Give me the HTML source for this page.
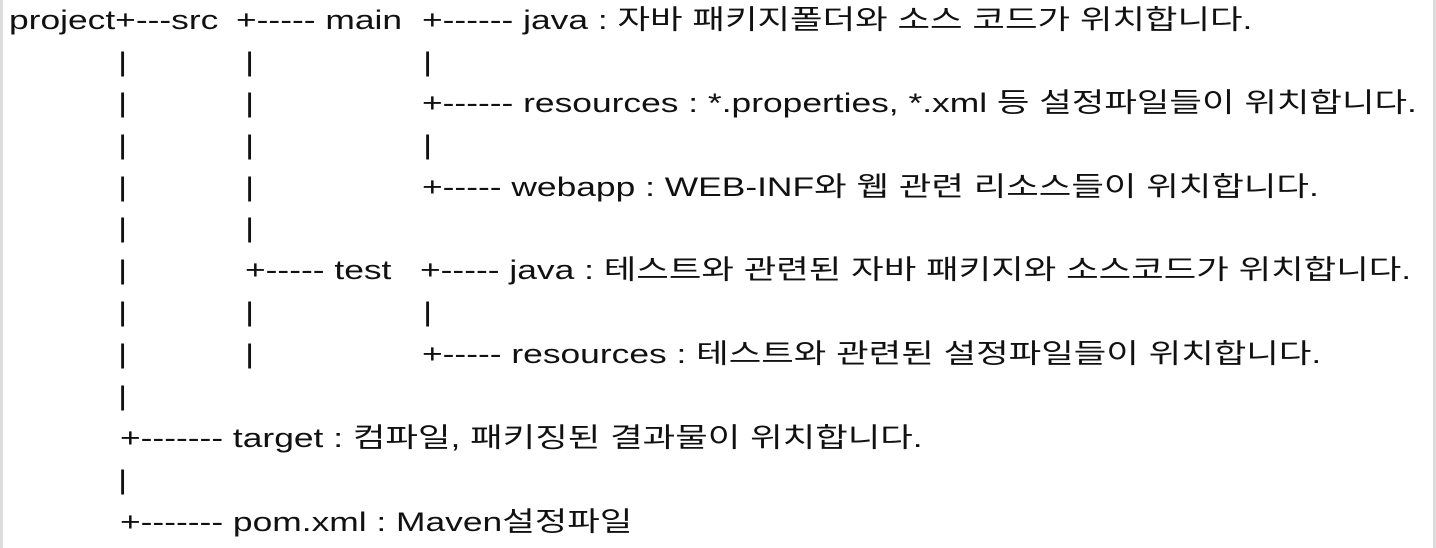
<!DOCTYPE html>
<html><head><meta charset="utf-8"><style>
html,body{margin:0;padding:0;background:#fff;width:1436px;height:548px;overflow:hidden;position:relative}
.b{position:absolute;top:0;bottom:0;width:3px;background:#dcdcdc}
.t{position:absolute;white-space:pre;font-family:"Liberation Sans","Noto Sans CJK KR",sans-serif;font-size:27px;line-height:42px;height:42px;color:#111;transform:scaleX(1.31);transform-origin:0 50%}
</style></head><body>
<div class="b" style="left:0"></div><div class="b" style="left:1433px"></div>
<div class="t" style="left:9px;top:-1px">project+---src</div>
<div class="t" style="left:236px;top:-1px">+----- main</div>
<div class="t" style="left:422px;top:-1px">+------ java : 자바 패키지폴더와 소스 코드가 위치합니다.</div>

<div class="t" style="left:118px;top:41px">|</div><div class="t" style="left:245px;top:41px">|</div><div class="t" style="left:423px;top:41px">|</div>
<div class="t" style="left:118px;top:82px">|</div><div class="t" style="left:245px;top:82px">|</div>
<div class="t" style="left:422px;top:82px">+------ resources : *.properties, *.xml 등 설정파일들이 위치합니다.</div>
<div class="t" style="left:118px;top:124px">|</div><div class="t" style="left:245px;top:124px">|</div><div class="t" style="left:423px;top:124px">|</div>
<div class="t" style="left:118px;top:166px">|</div><div class="t" style="left:245px;top:166px">|</div>
<div class="t" style="left:422px;top:166px">+----- webapp : WEB-INF와 웹 관련 리소스들이 위치합니다.</div>
<div class="t" style="left:118px;top:207px">|</div><div class="t" style="left:245px;top:207px">|</div>
<div class="t" style="left:118px;top:249px">|</div>
<div class="t" style="left:245px;top:249px">+----- test</div>
<div class="t" style="left:420px;top:249px">+----- java : 테스트와 관련된 자바 패키지와 소스코드가 위치합니다.</div>
<div class="t" style="left:118px;top:291px">|</div><div class="t" style="left:245px;top:291px">|</div><div class="t" style="left:423px;top:291px">|</div>
<div class="t" style="left:118px;top:333px">|</div><div class="t" style="left:245px;top:333px">|</div>
<div class="t" style="left:422px;top:333px">+----- resources : 테스트와 관련된 설정파일들이 위치합니다.</div>
<div class="t" style="left:118px;top:375px">|</div>
<div class="t" style="left:120px;top:417px">+------- target : 컴파일, 패키징된 결과물이 위치합니다.</div>
<div class="t" style="left:118px;top:459px">|</div>
<div class="t" style="left:120px;top:501px">+------- pom.xml : Maven설정파일</div>
</body></html>
